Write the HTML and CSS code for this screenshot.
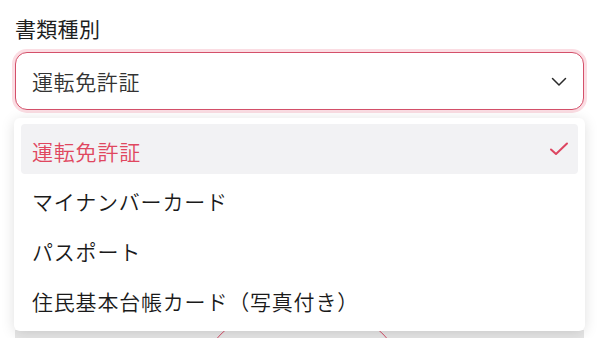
FILE: index.html
```html
<!DOCTYPE html>
<html lang="ja">
<head>
<meta charset="utf-8">
<link rel="stylesheet" href="styles.css">
</head>
<body>
<div class="page">
  <div class="field-label">書類種別</div>
  <div class="select">
    <span class="select-value">運転免許証</span>
    <svg class="chevron" width="16" height="10" viewBox="0 0 16 10"><path d="M1.5 1.5 L8 8 L14.5 1.5" fill="none" stroke="#2a2a2a" stroke-width="1.5" stroke-linecap="round" stroke-linejoin="round"/></svg>
  </div>
  <div class="menu">
    <div class="item selected">
      <span class="item-text">運転免許証</span>
      <svg class="check" width="20" height="16" viewBox="0 0 20 16"><path d="M2 8.5 L7 13 L18 2.5" fill="none" stroke="#dd4560" stroke-width="2" stroke-linecap="round" stroke-linejoin="round"/></svg>
    </div>
    <div class="item"><span class="item-text">マイナンバーカード</span></div>
    <div class="item"><span class="item-text">パスポート</span></div>
    <div class="item"><span class="item-text">住民基本台帳カード（写真付き）</span></div>
  </div>
  <div class="below">
    <div class="ring"></div>
  </div>
</div>
</body>
</html>
```
FILE: styles.css
```css
html, body {
  margin: 0;
  padding: 0;
  background: #ffffff;
  overflow: hidden;
}
body {
  font-family: "Noto Sans CJK JP", "Noto Sans", sans-serif;
  color: #222222;
}
.page {
  padding: 15px 16px 0 15px;
  width: 569px;
}
.field-label {
  font-size: 21px;
  line-height: 26px;
  font-weight: 400;
  letter-spacing: 0.3px;
  color: #1e1e1e;
}
.select {
  margin-top: 11px;
  height: 58px;
  box-sizing: border-box;
  border: 1.5px solid #d4506a;
  border-radius: 12px;
  box-shadow: 0 0 0 3px #fbdde3;
  display: flex;
  align-items: center;
  justify-content: space-between;
  padding: 0 16px 0 16px;
  background: #fff;
}
.select-value {
  font-size: 21px;
  font-weight: 350;
  letter-spacing: 0.6px;
  color: #333333;
}
.chevron {
  margin-top: 2px;
}
.menu {
  margin: 8px -1px 0 -1px;
  background: #ffffff;
  border-radius: 6px;
  box-shadow: 0 2px 14px rgba(0,0,0,0.13);
  padding: 6px 7px 7px 7px;
  position: relative;
  z-index: 2;
}
.item {
  height: 50px;
  box-sizing: border-box;
  display: flex;
  align-items: center;
  justify-content: space-between;
  padding: 0 9px 0 11px;
  font-size: 21px;
  font-weight: 350;
  color: #1a1a1a;
  border-radius: 4px;
}
.item-text {
  letter-spacing: 0.8px;
  padding-top: 3px;
}
.item.selected {
  background: #f2f2f4;
  color: #e0475f;
}
.below {
  position: relative;
  height: 8px;
  margin-top: -1px;
  background: #e6e6e6;
  overflow: hidden;
}
.ring {
  position: absolute;
  left: 172px;
  top: -30px;
  width: 230px;
  height: 230px;
  box-sizing: border-box;
  border: 1.5px solid #d4506a;
  border-radius: 50%;
}
```
